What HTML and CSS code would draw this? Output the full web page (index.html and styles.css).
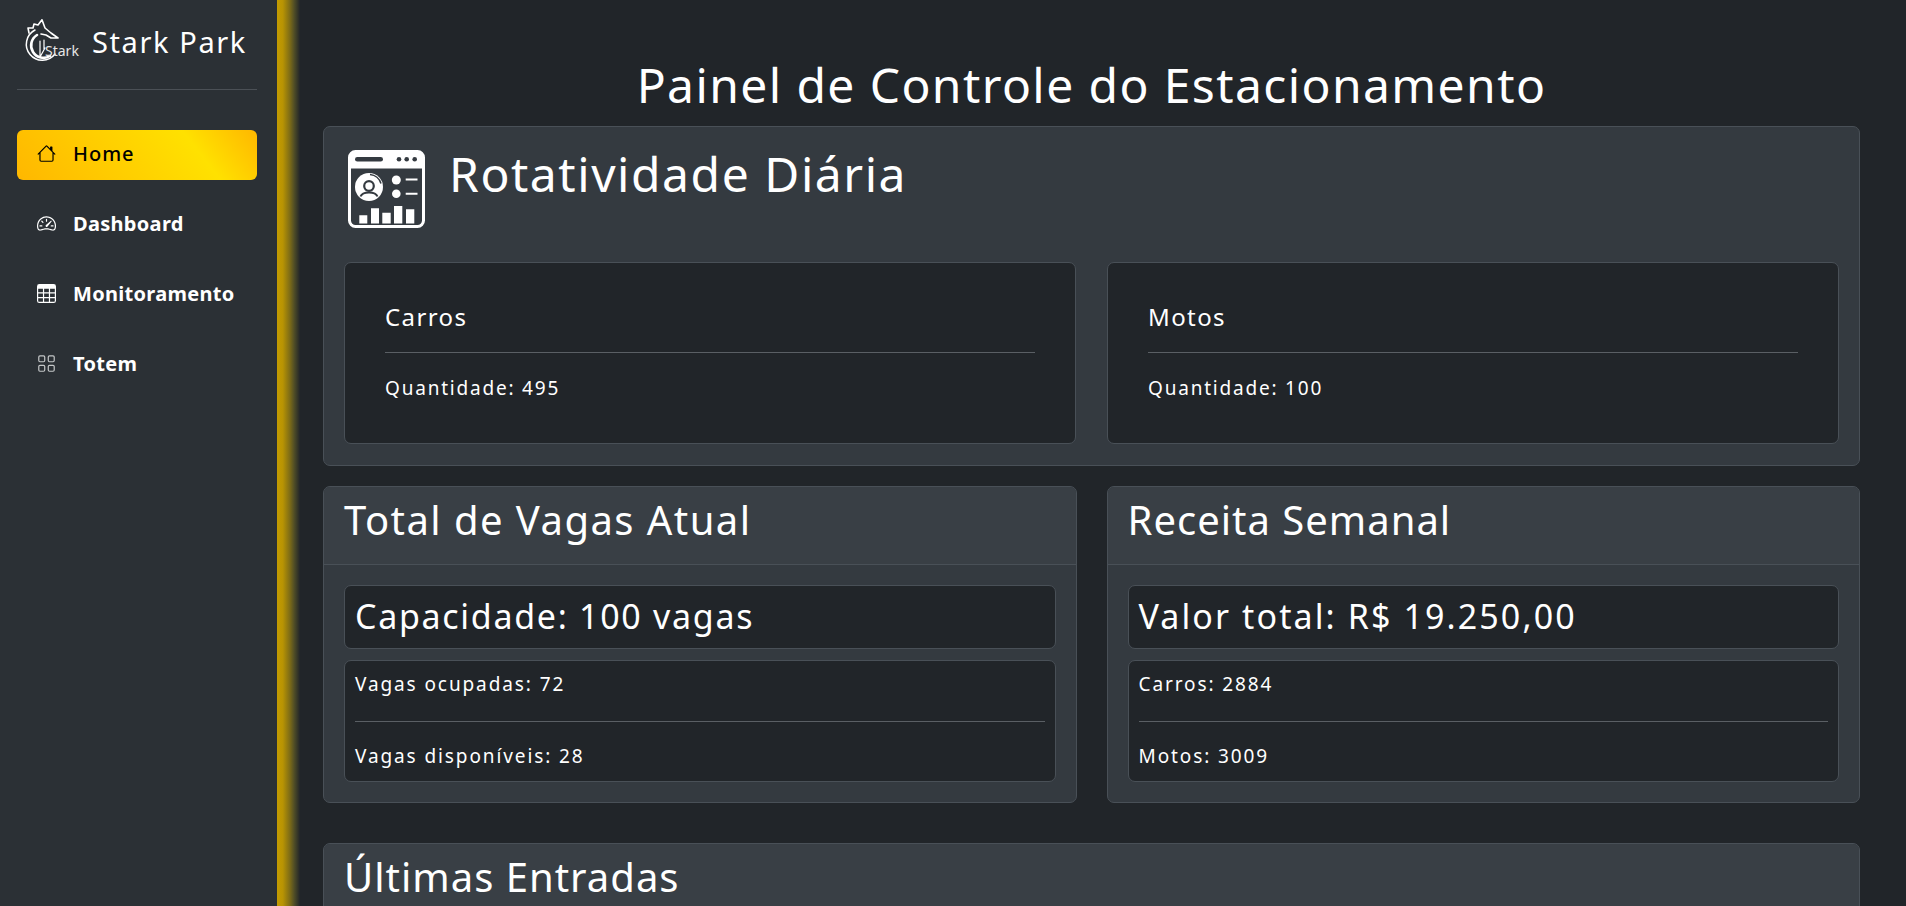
FILE: index.html
```html
<!DOCTYPE html>
<html lang="pt-BR">
<head>
<meta charset="utf-8">
<title>Stark Park</title>
<link rel="stylesheet" href="styles.css">
</head>
<body>
<div class="app">
  <aside class="sidebar">
    <div class="brand">
      <div class="logo">
        <svg class="logo-mark" viewBox="0 0 40 46" fill="none" stroke="#fff" stroke-linecap="round" stroke-linejoin="round">
          <path d="M11 11 A16 16 0 1 0 31 35" stroke-width="1.5"/>
          <path d="M13 16 A12 12 0 1 0 26 37" stroke-width="2.6"/>
          <path d="M5 14 L4 9 L9 9 L10 5 L14 6 L18 .8 L21 9 L27 14 L34 19 L27 19 L22 16 L17 15" stroke-width="1.6"/>
          <path d="M16 22 L16 38 L21 29 M20 21 L20 30" stroke-width="1.2"/>
        </svg>
        <span class="logo-word">Stark</span>
      </div>
      <span class="brand-name">Stark Park</span>
    </div>
    <nav class="nav">
      <a class="nav-item active">
        <svg class="nav-icon" viewBox="0 0 16 16" fill="currentColor"><path d="M8.707 1.5a1 1 0 0 0-1.414 0L.646 8.146a.5.5 0 0 0 .708.708L2 8.207V13.5A1.5 1.5 0 0 0 3.5 15h9a1.5 1.5 0 0 0 1.5-1.5V8.207l.646.647a.5.5 0 0 0 .708-.708L13 5.793V2.5a.5.5 0 0 0-.5-.5h-1a.5.5 0 0 0-.5.5v1.293L8.707 1.5ZM13 7.207V13.5a.5.5 0 0 1-.5.5h-9a.5.5 0 0 1-.5-.5V7.207l5-5 5 5Z"/></svg>
        <span>Home</span>
      </a>
      <a class="nav-item">
        <svg class="nav-icon" viewBox="0 0 16 16" fill="currentColor"><path d="M8 4a.5.5 0 0 1 .5.5V6a.5.5 0 0 1-1 0V4.5A.5.5 0 0 1 8 4zM3.732 5.732a.5.5 0 0 1 .707 0l.915.914a.5.5 0 1 1-.708.708l-.914-.915a.5.5 0 0 1 0-.707zM2 10a.5.5 0 0 1 .5-.5h1.586a.5.5 0 0 1 0 1H2.5A.5.5 0 0 1 2 10zm9.5 0a.5.5 0 0 1 .5-.5h1.5a.5.5 0 0 1 0 1H12a.5.5 0 0 1-.5-.5zm.754-4.246a.389.389 0 0 0-.527-.02L7.547 9.31a.91.91 0 1 0 1.302 1.258l3.434-4.297a.389.389 0 0 0-.029-.518z"/><path fill-rule="evenodd" d="M0 10a8 8 0 1 1 15.547 2.661c-.442 1.253-1.845 1.602-2.932 1.25C11.309 13.488 9.475 13 8 13c-1.474 0-3.31.488-4.615.911-1.087.352-2.49.003-2.932-1.25A7.988 7.988 0 0 1 0 10zm8-7a7 7 0 0 0-6.603 9.329c.203.575.923.876 1.68.63C4.397 12.533 6.358 12 8 12s3.604.532 4.923.96c.757.245 1.477-.056 1.68-.631A7 7 0 0 0 8 3z"/></svg>
        <span>Dashboard</span>
      </a>
      <a class="nav-item">
        <svg class="nav-icon" viewBox="0 0 16 16" fill="currentColor"><path d="M0 2a2 2 0 0 1 2-2h12a2 2 0 0 1 2 2v12a2 2 0 0 1-2 2H2a2 2 0 0 1-2-2V2zm15 2h-4v3h4V4zm0 4h-4v3h4V8zm0 4h-4v3h3a1 1 0 0 0 1-1v-2zm-5 3v-3H6v3h4zm-5 0v-3H1v2a1 1 0 0 0 1 1h3zm-4-4h4V8H1v3zm0-4h4V4H1v3zm5-3v3h4V4H6zm4 4H6v3h4V8z"/></svg>
        <span>Monitoramento</span>
      </a>
      <a class="nav-item">
        <svg class="nav-icon muted" viewBox="0 0 16 16" fill="currentColor"><path d="M1 2.5A1.5 1.5 0 0 1 2.5 1h3A1.5 1.5 0 0 1 7 2.5v3A1.5 1.5 0 0 1 5.5 7h-3A1.5 1.5 0 0 1 1 5.5v-3zM2.5 2a.5.5 0 0 0-.5.5v3a.5.5 0 0 0 .5.5h3a.5.5 0 0 0 .5-.5v-3a.5.5 0 0 0-.5-.5h-3zm6.5.5A1.5 1.5 0 0 1 10.5 1h3A1.5 1.5 0 0 1 15 2.5v3A1.5 1.5 0 0 1 13.5 7h-3A1.5 1.5 0 0 1 9 5.5v-3zm1.5-.5a.5.5 0 0 0-.5.5v3a.5.5 0 0 0 .5.5h3a.5.5 0 0 0 .5-.5v-3a.5.5 0 0 0-.5-.5h-3zM1 10.5A1.5 1.5 0 0 1 2.5 9h3A1.5 1.5 0 0 1 7 10.5v3A1.5 1.5 0 0 1 5.5 15h-3A1.5 1.5 0 0 1 1 13.5v-3zm1.5-.5a.5.5 0 0 0-.5.5v3a.5.5 0 0 0 .5.5h3a.5.5 0 0 0 .5-.5v-3a.5.5 0 0 0-.5-.5h-3zm6.5.5A1.5 1.5 0 0 1 10.5 9h3a1.5 1.5 0 0 1 1.5 1.5v3a1.5 1.5 0 0 1-1.5 1.5h-3A1.5 1.5 0 0 1 9 13.5v-3zm1.5-.5a.5.5 0 0 0-.5.5v3a.5.5 0 0 0 .5.5h3a.5.5 0 0 0 .5-.5v-3a.5.5 0 0 0-.5-.5h-3z"/></svg>
        <span>Totem</span>
      </a>
    </nav>
  </aside>
  <div class="edge"></div>
  <main class="main">
    <h1 class="page-title">Painel de Controle do Estacionamento</h1>

    <section class="card daily">
      <div class="daily-head">
        <svg class="daily-icon" viewBox="0 0 77 79" fill="none">
          <rect x="1.5" y="1.5" width="74" height="75" rx="6" stroke="#fff" stroke-width="3"/>
          <path d="M2 7a5 5 0 0 1 5-5h63a5 5 0 0 1 5 5v11.500H2z" fill="#fff"/>
          <rect x="7" y="7" width="28" height="4.600" rx="2.300" fill="#343a40"/>
          <circle cx="51" cy="9.300" r="2.300" fill="#343a40"/>
          <circle cx="58.700" cy="9.300" r="2.300" fill="#343a40"/>
          <circle cx="66.700" cy="9.300" r="2.300" fill="#343a40"/>
          <circle cx="21" cy="37" r="14" fill="#fff"/>
          <path d="M22 24.500A12.500 12.500 0 0 1 33 33.500" stroke="#343a40" stroke-width="1.500"/>
          <circle cx="21" cy="36" r="4.800" stroke="#343a40" stroke-width="2.200"/>
          <path d="M12.500 46.500c2-5.500 15-5.500 17 0" stroke="#343a40" stroke-width="2"/>
          <circle cx="48.300" cy="30" r="4.500" fill="#fff"/>
          <circle cx="48.300" cy="43.700" r="4.300" fill="#fff"/>
          <path d="M57.700 29.500h11.800M57.700 43.700h11.800" stroke="#fff" stroke-width="2"/>
          <path d="M11.300 65.300h8v8.300h-8zM23 58.300h8v15.300h-8zM34.300 62.700h8.400v10.900h-8.400zM46 56h8.300v17.600h-8.300zM58 59.300h8.300v14.300h-8.300z" fill="#fff"/>
        </svg>
        <h2 class="daily-title">Rotatividade Diária</h2>
      </div>
      <div class="two-col inner-cols">
        <div class="inner stat">
          <h3 class="stat-title">Carros</h3>
          <hr class="rule">
          <p class="stat-text">Quantidade: 495</p>
        </div>
        <div class="inner stat">
          <h3 class="stat-title">Motos</h3>
          <hr class="rule">
          <p class="stat-text">Quantidade: 100</p>
        </div>
      </div>
    </section>

    <div class="two-col outer">
      <section class="card">
        <h2 class="card-header wide">Total de Vagas Atual</h2>
        <div class="card-body">
          <div class="inner headline">Capacidade: 100 vagas</div>
          <div class="inner detail">
            <p class="detail-text">Vagas ocupadas: 72</p>
            <hr class="rule">
            <p class="detail-text">Vagas disponíveis: 28</p>
          </div>
        </div>
      </section>
      <section class="card">
        <h2 class="card-header">Receita Semanal</h2>
        <div class="card-body">
          <div class="inner headline wide">Valor total: R$ 19.250,00</div>
          <div class="inner detail">
            <p class="detail-text">Carros: 2884</p>
            <hr class="rule">
            <p class="detail-text">Motos: 3009</p>
          </div>
        </div>
      </section>
    </div>

    <section class="card latest">
      <h2 class="card-header">Últimas Entradas</h2>
    </section>
  </main>
</div>
</body>
</html>
```

FILE: styles.css
```css
* { box-sizing: border-box; }
html, body { margin: 0; height: 100%; overflow: hidden; }
body {
  background: #212529;
  color: #fff;
  font-family: "Noto Sans", "Open Sans", sans-serif;
}
.app { display: flex; height: 906px; }

.sidebar {
  width: 277px;
  flex: none;
  background: #2b3035;
  padding: 0 20px 0 17px;
}
.edge {
  width: 23px;
  flex: none;
  background: linear-gradient(90deg, #c49b00 0%, #b89403 25%, #7f6d16 55%, #4f4d26 75%, #212529 100%);
}
.brand {
  height: 90px;
  display: flex;
  align-items: center;
  gap: 13px;
  padding: 0 0 6px 7px;
  border-bottom: 1px solid #4b5056;
}
.logo { position: relative; width: 55px; height: 46px; flex: none; }
.logo-mark { width: 40px; height: 46px; display: block; }
.logo-word {
  position: absolute;
  left: 21px;
  top: 23px;
  font-size: 14px;
  line-height: 18px;
  color: #e6e6e6;
}
.brand-name { font-size: 29px; letter-spacing: 1.6px; white-space: nowrap; }

.nav { display: flex; flex-direction: column; gap: 20px; margin-top: 40px; }
.nav-item {
  height: 50px;
  display: flex;
  align-items: center;
  gap: 17px;
  padding: 0 0 3px 20px;
  border-radius: 6px;
  color: #fff;
  font-size: 20px;
  font-weight: 700;
  letter-spacing: 0.3px;
}
.nav-item.active {
  background: linear-gradient(52deg, #ffb700 0%, #ffe100 73%, #ffb700 100%);
  color: #000;
  font-weight: 500;
  letter-spacing: 1px;
}
.nav-icon { width: 19px; height: 19px; flex: none; }
.nav-icon.muted { color: #c4c6c8; }

.main { flex: 1; min-width: 0; padding: 0 46px 0 23px; }
.page-title {
  margin: 0;
  height: 126px;
  padding-top: 51px;
  text-align: center;
  font-size: 48px;
  line-height: 68px;
  font-weight: 400;
  letter-spacing: 1.4px;
}
.card {
  background: #343a40;
  border: 1px solid #495057;
  border-radius: 7px;
}
.daily { padding: 20px; height: 340px; }
.daily-head { display: flex; gap: 24px; height: 115px; padding-left: 4px; }
.daily-icon { width: 77px; height: 79px; flex: none; margin-top: 3px; }
.daily-title {
  margin: 0;
  font-size: 48px;
  line-height: 54px;
  font-weight: 400;
  letter-spacing: 1.55px;
}
.two-col { display: grid; grid-template-columns: 1fr 1fr; gap: 30px; }
.two-col.inner-cols { gap: 31px; }
.two-col.outer { margin-top: 20px; }
.inner {
  background: #212529;
  border: 1px solid #495057;
  border-radius: 7px;
}
.stat { height: 182px; padding: 30px 40px 0; }
.stat-title {
  margin: 0;
  font-size: 24px;
  line-height: 48px;
  font-weight: 400;
  letter-spacing: 1.4px;
}
.rule { margin: 0; border: 0; border-top: 1px solid #5a5f64; }
.stat .rule { margin-top: 11px; }
.stat-text { margin: 22px 0 0; font-size: 19px; line-height: 26px; letter-spacing: 1.8px; }

.card-header {
  margin: 0;
  height: 78px;
  padding: 7px 20px 0;
  background: #393f45;
  border-bottom: 1px solid #495057;
  border-radius: 6px 6px 0 0;
  font-size: 40px;
  line-height: 52px;
  font-weight: 400;
  letter-spacing: 1px;
}
.card-header.wide { letter-spacing: 1.45px; }
.card-body { padding: 20px; display: flex; flex-direction: column; gap: 11px; }
.headline {
  height: 64px;
  padding: 0 10px;
  font-size: 34px;
  line-height: 61px;
  letter-spacing: 1.7px;
}
.headline.wide { letter-spacing: 2.1px; }
.detail { height: 122px; padding: 0 10px; }
.detail-text { margin: 0; height: 60px; font-size: 19px; line-height: 47px; letter-spacing: 1.9px; }
.detail-text + .rule + .detail-text { height: 60px; line-height: 68px; }
.latest { margin-top: 40px; }
```
